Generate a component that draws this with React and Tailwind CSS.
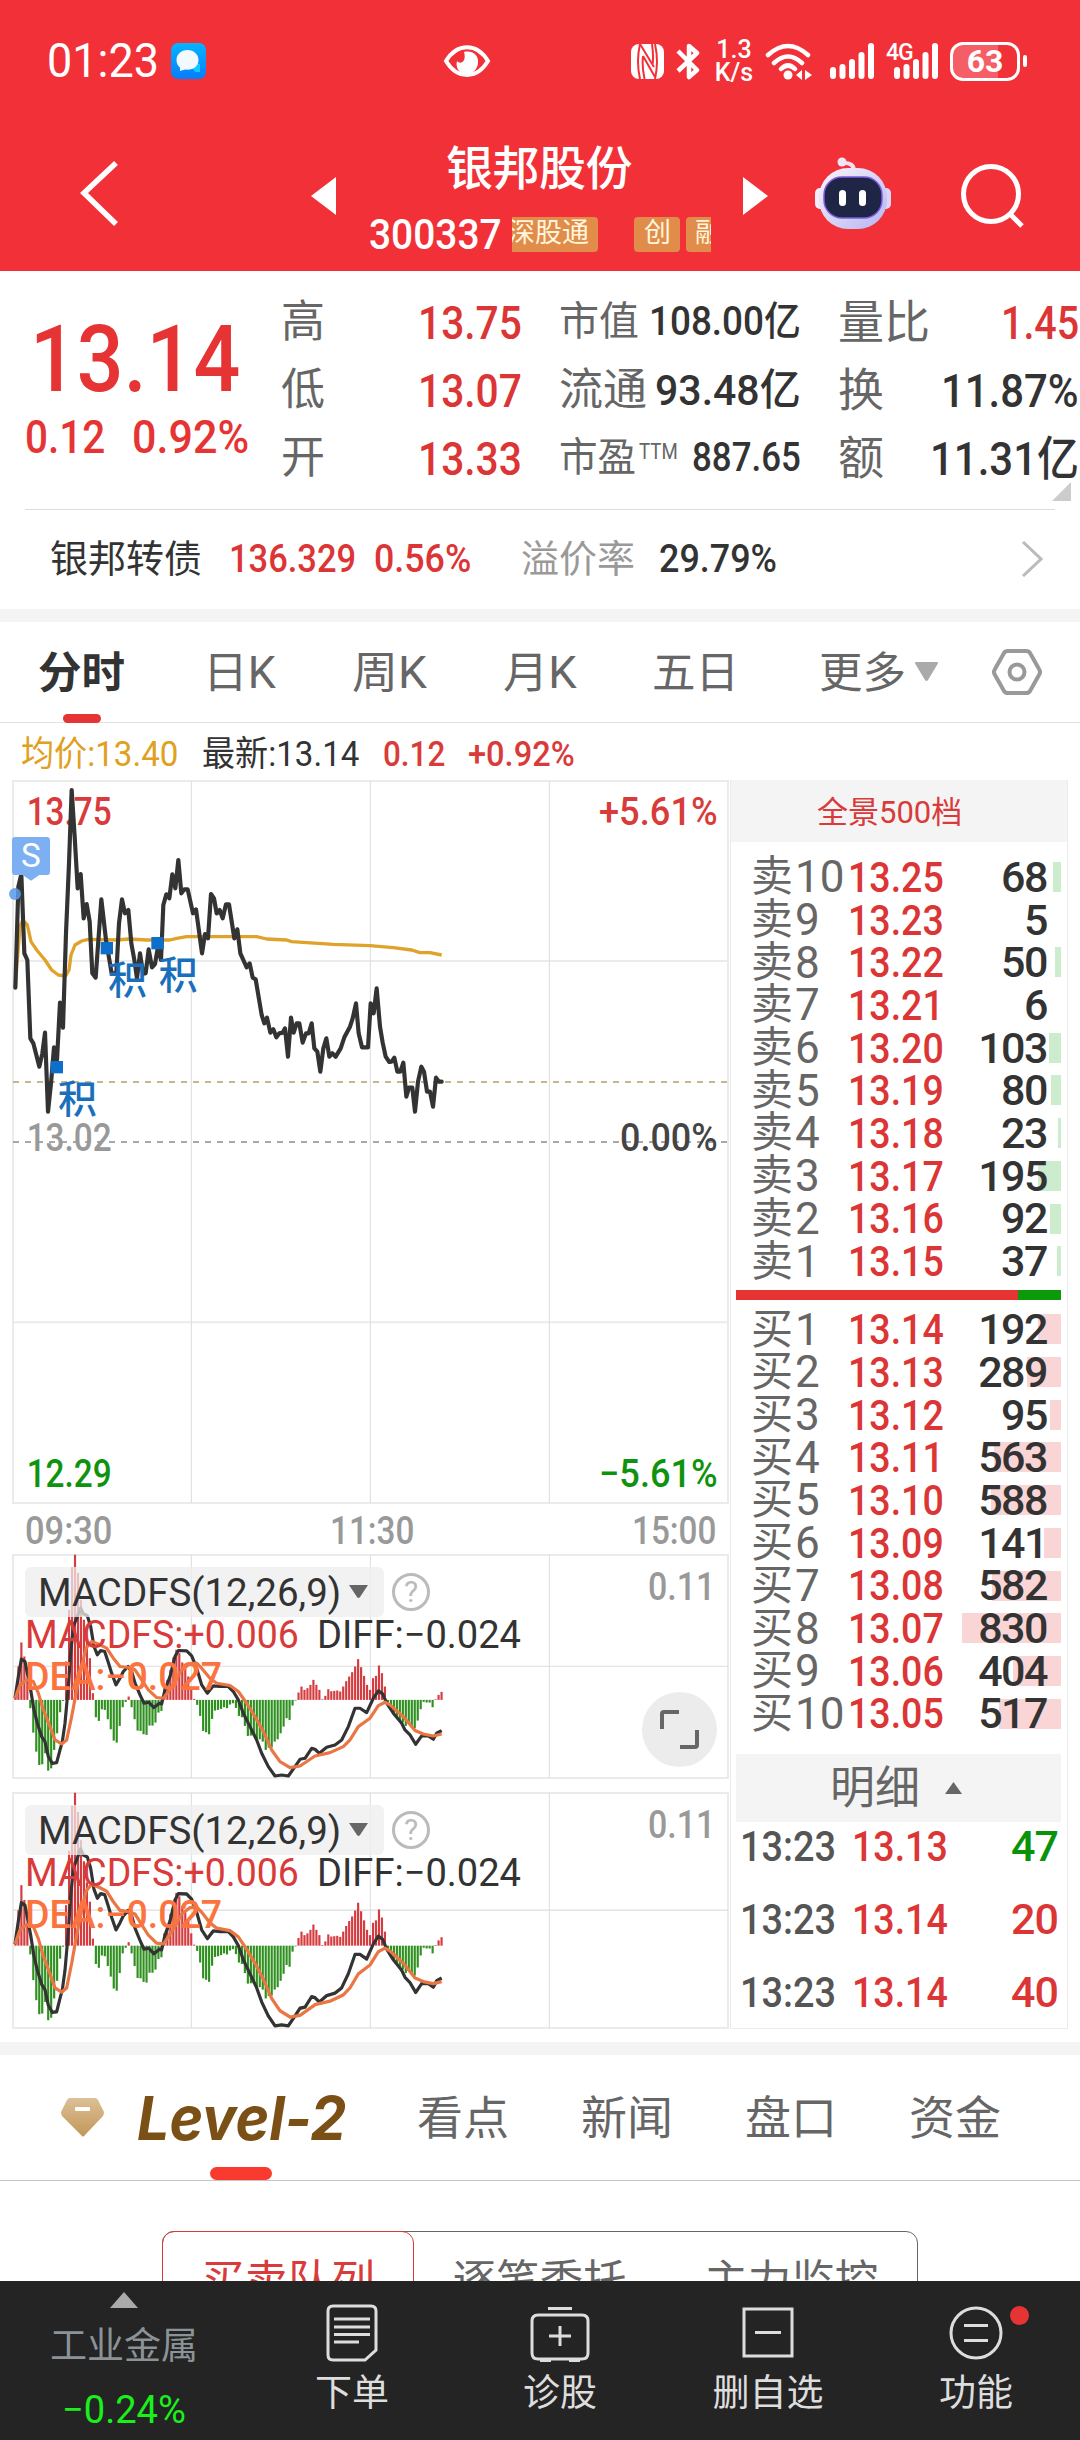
import React, { useLayoutEffect, useRef, useState } from 'react';

const asks = [
  ['卖10', '13.25', 68],
  ['卖9', '13.23', 5],
  ['卖8', '13.22', 50],
  ['卖7', '13.21', 6],
  ['卖6', '13.20', 103],
  ['卖5', '13.19', 80],
  ['卖4', '13.18', 23],
  ['卖3', '13.17', 195],
  ['卖2', '13.16', 92],
  ['卖1', '13.15', 37],
];

const bids = [
  ['买1', '13.14', 192],
  ['买2', '13.13', 289],
  ['买3', '13.12', 95],
  ['买4', '13.11', 563],
  ['买5', '13.10', 588],
  ['买6', '13.09', 141],
  ['买7', '13.08', 582],
  ['买8', '13.07', 830],
  ['买9', '13.06', 404],
  ['买10', '13.05', 517],
];

const trades = [
  { time: '13:23', price: '13.13', volume: 47, color: 'text-[#0a930a]' },
  { time: '13:23', price: '13.14', volume: 20, color: 'text-[#dc3535]' },
  { time: '13:23', price: '13.14', volume: 40, color: 'text-[#dc3535]' },
];

// the charts are drawn on a canvas of 3 units per pixel, one minute = 8.94 units
const price = '46,683 55,380 64,343 73,580 82,600 91,835 100,850 109,885 118,920 127,880 135,818 144,1055 153,970 162,862 171,900 180,728 189,803 198,520 207,310 215,90 224,230 233,385 242,342 251,475 260,432 269,485 277,640 287,653 304,418 318,540 335,640 349,640 357,490 366,418 375,460 385,450 394,550 403,600 411,655 420,580 429,640 437,640 446,568 456,622 465,612 474,560 483,600 490,435 499,403 508,415 517,343 526,385 535,300 544,400 553,388 563,388 579,460 588,448 606,580 615,522 624,535 633,402 642,415 650,460 659,450 668,475 678,433 687,433 703,535 712,508 721,580 740,622 749,610 758,653 767,658 785,765 793,790 801,773 811,818 820,808 829,832 838,820 848,818 855,805 864,890 873,773 881,818 890,790 898,790 908,848 918,820 926,820 935,790 943,865 952,875 961,935 970,865 979,835 988,890 997,880 1007,890 1022,865 1033,832 1050,800 1058,775 1068,730 1076,820 1086,862 1104,862 1112,730 1121,760 1130,685 1140,800 1148,848 1157,890 1168,906 1175,905 1183,893 1192,935 1201,935 1210,908 1219,1010 1227,983 1237,983 1245,1055 1254,965 1264,920 1272,935 1281,995 1290,995 1299,1040 1308,953 1317,965 1325,965';
const average = '46,683 52,600 60,500 68,480 82,495 93,545 110,570 135,600 155,630 175,645 197,648 207,630 213,585 225,555 245,543 265,538 350,540 385,537 440,540 510,540 530,535 560,530 770,530 800,537 860,540 875,545 1000,553 1110,557 1180,563 1235,570 1260,578 1290,578 1325,585';

const histogram = [
  10, 100, 172, 130, 65, -25, -98, -155, -195, -193, -160, -212, -205, -150, -100, -37, -3, 115, 270, 398, 435, 380, 300, 240,
  180, 125, 20, -52, -63, -28, -30, -58, -88, -122, -128, -78, -22, -6, 10, -22, -58, -92, -93, -103, -105, -77, -77, -68,
  -38, -33, 35, 60, 90, 127, 150, 140, 112, 95, 70, 35, 3, -15, -48, -93, -97, -103, -57, -32, -30, -27, -22, -25,
  -14, -10, -24, -48, -52, -78, -108, -107, -107, -120, -118, -125, -150, -143, -142, -125, -118, -100, -80, -55, -60, -17, -2, 22,
  40, 30, 35, 45, 60, 45, 30, 2, 12, 32, 26, 27, 28, 25, 40, 56, 70, 83, 100, 122, 98, 72, 45, 30,
  65, 72, 103, 80, 40, -8, -30, -45, -55, -62, -68, -78, -70, -82, -85, -62, -28, -6, -8, -8, -22, 2, 15, 24,
];
const diff = '45,475 55,410 64,358 75,365 82,400 92,450 102,510 112,550 125,590 135,605 145,650 157,670 170,668 180,630 187,605 195,550 205,440 212,340 220,260 230,235 242,205 250,222 262,228 272,260 282,320 292,345 302,332 314,335 325,368 335,400 348,435 360,415 370,395 384,380 395,395 405,430 420,465 432,490 446,487 462,503 478,490 485,492 495,450 510,410 525,350 535,332 560,333 575,348 590,385 605,435 622,460 640,438 660,440 685,440 700,455 715,480 730,520 750,560 770,600 785,640 805,680 825,708 845,705 865,708 885,680 900,658 915,655 935,625 945,628 958,640 980,622 1005,615 1025,600 1045,560 1065,505 1080,505 1100,518 1120,475 1135,453 1148,462 1160,490 1180,520 1205,550 1215,570 1230,585 1247,613 1265,588 1285,588 1300,598 1310,580 1325,572';
const dea = '45,475 60,435 80,420 100,425 115,460 130,510 150,560 165,600 185,612 200,600 215,530 230,450 245,380 258,325 275,305 300,315 320,325 340,355 360,380 385,383 405,390 425,420 445,450 470,473 490,475 505,455 525,425 545,390 570,372 590,370 605,385 630,415 650,430 690,437 715,455 740,490 765,530 790,575 815,630 840,665 870,683 900,678 945,648 990,638 1030,620 1050,600 1075,560 1110,535 1135,497 1155,487 1170,495 1210,530 1245,572 1270,582 1300,588 1325,582';

// squeezes a line of text to the given width, like the condensed digits of the app
const Fit = ({ w, className = '', children }) => {
  const ref = useRef(null);
  const [scale, setScale] = useState(1);

  useLayoutEffect(() => {
    setScale(w / ref.current.offsetWidth);
  }, [w, children]);

  return (
    <span className={`flex shrink-0 ${className}`} style={{ width: w }}>
      <span ref={ref} className="shrink-0 origin-left whitespace-nowrap" style={{ transform: `scaleX(${scale})` }}>
        {children}
      </span>
    </span>
  );
};

const Signal = ({ className }) => (
  <svg className={className} width="45" height="36" viewBox="0 0 45 36" fill="#fff">
    <rect x="0" y="24" width="6" height="12" rx="3" />
    <rect x="9.5" y="21" width="6" height="15" rx="3" />
    <rect x="19" y="16" width="6" height="20" rx="3" />
    <rect x="28.5" y="9" width="6" height="27" rx="3" />
    <rect x="38" y="0" width="6" height="36" rx="3" />
  </svg>
);

const StatusBar = () => (
  <div className="flex h-[122px] items-center pl-[47px] text-white">
    <Fit w={112} className="text-[49px]">01:23</Fit>
    <svg className="ml-3" width="35" height="36" viewBox="0 0 35 36">
      <defs>
        <linearGradient id="msg" x1="0" y1="0" x2="0" y2="1">
          <stop offset="0" stopColor="#05b4ff" />
          <stop offset="1" stopColor="#057cff" />
        </linearGradient>
      </defs>
      <rect width="35" height="36" rx="7" fill="url(#msg)" />
      <path d="M21 24a6 5 0 0 1 8-3v8h-5z" fill="#12c8ff" />
      <path d="M16.500 7C10 7 5.500 11.500 5.500 17c0 3.500 1.500 6 3.500 7.500V28l5-1.500c8 1 13.500-3 13.500-9.500C27.500 11.500 23 7 16.500 7z" fill="#f2faff" />
    </svg>
    <svg className="ml-[237px]" width="48" height="34" viewBox="0 0 48 34">
      <path d="M3 17C14-1.500 34-1.500 45 17 34 35.500 14 35.500 3 17z" fill="none" stroke="#fff" strokeWidth="4" />
      <path d="M21 8c8-2 15 3 14 11-.5 6-5 11-11 11-7 0-12-6-10-13 3 4 10 1 7-9z" fill="#fff" />
    </svg>
    <svg className="ml-[140px]" width="33" height="35" viewBox="0 0 33 35">
      <rect x="0" y="0" width="33" height="35" rx="8" fill="#fff" />
      <path d="M9 0C6.500 11 6.500 24 9 35M24 0c2.500 11 2.500 24 0 35" fill="none" stroke="#f23038" strokeWidth="2" />
      <path d="M9 0l14 23M12 12c-1 8 0 16 1.500 23M12 12l12 21M21 0c1 7 1.500 15 .5 21" fill="none" stroke="#f23038" strokeWidth="2" />
    </svg>
    <svg className="ml-3" width="24" height="37" viewBox="0 0 24 37" fill="none" stroke="#fff" strokeWidth="4.500" strokeLinejoin="round">
      <path d="M2 8l19 19-8 7V3l8 7L2 28" />
    </svg>
    <div className="ml-[17px] flex w-[34px] flex-col items-center text-[25px] leading-[23px] font-medium">
      <span>1.3</span>
      <span>K/s</span>
    </div>
    <svg className="ml-[14px]" width="48" height="37" viewBox="0 0 48 37" fill="none" stroke="#fff" strokeWidth="4.500" strokeLinecap="round">
      <path d="M3 12q20-18 40 0M9 20q14-13 28 0M16 26q7-7 14 0" />
      <circle cx="23" cy="32" r="4.500" fill="#fff" stroke="none" />
      <path d="M37 27v10l-6-5zM40 27v10l7-5z" fill="#fff" stroke="none" />
    </svg>
    <Signal className="ml-[17px]" />
    <div className="relative ml-[19px]">
      <Signal />
      <span className="absolute top-0 -left-[8px] bg-[#f23038] text-[23px] leading-[20px] font-medium tracking-tighter">4G</span>
    </div>
    <div className="ml-[11px] flex h-[39px] w-[70px] items-center justify-center rounded-[13px] border-[3px] border-white bg-linear-to-r from-[#f55e66] from-70% to-[#f23038] to-70% text-[32px] leading-none font-bold">
      63
    </div>
    <div className="ml-[3px] h-[12px] w-[4px] rounded-full bg-white" />
  </div>
);

const Badge = ({ children, className, shift = '' }) => (
  <span className={`flex h-[35px] items-center overflow-hidden bg-[#e18c4b] text-[27px] leading-none whitespace-nowrap text-[#fff6dd] ${className}`}>
    <span className={`-mt-px ${shift}`}>{children}</span>
  </span>
);

const Robot = () => (
  <svg className="ml-12" width="76" height="74" viewBox="0 0 76 74">
    <defs>
      <linearGradient id="head" x1="0" y1="0" x2="1" y2="1">
        <stop offset="0" stopColor="#fdf4fb" />
        <stop offset="1" stopColor="#b4b5f3" />
      </linearGradient>
    </defs>
    <path d="M27 6q12-1 12 8" fill="none" stroke="#f3dff0" strokeWidth="4" />
    <circle cx="27" cy="5" r="4.500" fill="#f3e4f6" />
    <rect x="0" y="31" width="12" height="21" rx="5" fill="#f3ecfb" />
    <rect x="64" y="31" width="12" height="21" rx="5" fill="#dcd6f8" />
    <rect x="4" y="11" width="68" height="61" rx="29" fill="url(#head)" />
    <rect x="9" y="20" width="58" height="41" rx="18" fill="#1f2645" stroke="#7a5be0" strokeWidth="1.500" />
    <rect x="24" y="33" width="7" height="16" rx="3.500" fill="#fff" />
    <rect x="44" y="33" width="7" height="16" rx="3.500" fill="#fff" />
  </svg>
);

const Header = () => (
  <div className="flex h-[149px] items-start pl-[78px] text-white">
    <svg className="mt-[39px]" width="42" height="66" viewBox="0 0 42 66" fill="none" stroke="#fff" strokeWidth="5.500">
      <path d="M38 2L6 32l32 31" />
    </svg>
    <svg className="mt-[55px] ml-[191px]" width="25" height="38" viewBox="0 0 25 38" fill="#fff">
      <path d="M25 0v38L0 19z" />
    </svg>
    <div className="ml-[30px] flex w-[346px] flex-col">
      <div className="mt-[23px] ml-[80px] text-[47px] leading-[48px] font-medium tracking-[-0.5px]">银邦股份</div>
      <div className="mt-[20px] flex items-center">
        <Fit w={133} className="ml-[3px] text-[43px] leading-[42px] font-medium">300337</Fit>
        <Badge className="ml-[10px] w-[86px] rounded-r-[4px]" shift="-ml-1">深股通</Badge>
        <Badge className="ml-[36px] w-[46px] rounded-[4px] pl-[10px]">创</Badge>
        <Badge className="ml-[6px] w-[25px] rounded-l-[4px] pl-[9px]">融</Badge>
      </div>
    </div>
    <svg className="mt-[55px] ml-[31px]" width="25" height="38" viewBox="0 0 25 38" fill="#fff">
      <path d="M0 0v38l25-19z" />
    </svg>
    <div className="-ml-px mt-[35px]"><Robot /></div>
    <svg className="mt-[41px] ml-[70px]" width="64" height="66" viewBox="0 0 64 66" fill="none" stroke="#fff" strokeWidth="5">
      <circle cx="30" cy="31" r="27.500" />
      <path d="M49 51l12 12" />
    </svg>
  </div>
);

const Quote = () => (
  <div className="flex h-[238px] w-[1080px] leading-none">
    <div className="w-[281px] pl-[25px] text-[#e63333]">
      <Fit w={210} className="mt-[42px] ml-[5px] text-[93px] font-medium">13.14</Fit>
      <div className="mt-[8px] flex text-[46px]">
        <Fit w={80} className="font-medium">0.12</Fit>
        <Fit w={117} className="ml-[27px] font-medium">0.92%</Fit>
      </div>
    </div>
    <div className="grid w-[240px] auto-rows-[68px] items-center pt-[17px] text-[44px] text-[#666]">
      <div className="flex items-center"><span className="w-[137px]">高</span><Fit w={104} className="text-[47px] font-medium text-[#dc3535]">13.75</Fit></div>
      <div className="flex items-center"><span className="w-[137px]">低</span><Fit w={104} className="text-[47px] font-medium text-[#dc3535]">13.07</Fit></div>
      <div className="flex items-center"><span className="w-[137px]">开</span><Fit w={104} className="text-[47px] font-medium text-[#dc3535]">13.33</Fit></div>
    </div>
    <div className="ml-[38px] grid w-[242px] auto-rows-[68px] items-center pt-[17px] text-[40px] text-[#666]">
      <div className="flex items-center justify-between"><span>市值</span><Fit w={152} className="text-[40px] font-medium text-[#333]">108.00亿</Fit></div>
      <div className="flex items-center justify-between"><span className="text-[44px]">流通</span><Fit w={146} className="text-[43px] font-medium text-[#333]">93.48亿</Fit></div>
      <div className="flex items-center justify-between"><Fit w={77}>市盈</Fit><Fit w={39} className="-mt-3 text-[22px]">TTM</Fit><Fit w={109} className="ml-3 text-[40px] font-medium text-[#333]">887.65</Fit></div>
    </div>
    <div className="ml-[37px] grid w-[241px] auto-rows-[68px] items-center pt-[17px] text-[46px] text-[#666]">
      <div className="flex items-center justify-between"><span>量比</span><Fit w={78} className="text-[47px] font-medium text-[#dc3535]">1.45</Fit></div>
      <div className="flex items-center justify-between"><span>换</span><Fit w={138} className="text-[47px] font-medium text-[#333]">11.87%</Fit></div>
      <div className="flex items-center justify-between"><span>额</span><Fit w={149} className="text-[47px] font-medium text-[#333]">11.31亿</Fit></div>
      <svg className="-mt-[10px] ml-[214px] self-start" width="19" height="19" viewBox="0 0 19 19"><path d="M19 0v19H0z" fill="#ccc" /></svg>
    </div>
  </div>
);

const Bond = () => (
  <div className="mx-[25px] flex h-[100px] items-center border-t border-[#ddd] pr-[12px] pb-[2px] pl-[25px] text-[38px] leading-none">
    <span className="text-[#333]">银邦转债</span>
    <Fit w={127} className="ml-[27px] font-medium text-[#dc3535]">136.329</Fit>
    <Fit w={97} className="ml-[18px] font-medium text-[#dc3535]">0.56%</Fit>
    <span className="ml-[50px] text-[#999]">溢价率</span>
    <Fit w={118} className="ml-[24px] font-medium text-[#333]">29.79%</Fit>
    <svg className="ml-auto" width="22" height="36" viewBox="0 0 22 36" fill="none" stroke="#bbb" strokeWidth="3"><path d="M2 1l18 17L2 35" /></svg>
  </div>
);

const ChartTabs = () => (
  <div className="flex h-[101px] items-center border-b border-[#e2e2e2] pt-[3px] pl-[38px] text-[43.5px] leading-none text-[#666]">
    <div className="relative -mt-[3px] flex h-[101px] items-center pt-[3px] font-bold text-[#333]">
      分时
      <span className="absolute bottom-0 left-[25px] h-[9px] w-[38px] rounded-full bg-[#e63333]" />
    </div>
    <Fit w={73} className="ml-[78px]">日K</Fit>
    <Fit w={75} className="ml-[76px]">周K</Fit>
    <Fit w={74} className="ml-[76px]">月K</Fit>
    <span className="ml-[75px]">五日</span>
    <span className="ml-[80px]">更多</span>
    <svg className="-mt-1 ml-[9px]" width="23" height="20" viewBox="0 0 23 20"><path d="M1 0h21q2 0 0 3L13 18q-1.500 2-3 0L1 3q-2-3 0-3z" fill="#aaa" /></svg>
    <svg className="-mt-[3px] ml-[54px]" width="50" height="48" viewBox="0 0 50 48" fill="none" stroke="#999" strokeWidth="4" strokeLinejoin="round">
      <path d="M16 3h18q3 0 4 2l9 16q2 3 0 6l-9 16q-1 2-4 2H16q-3 0-4-2L3 27q-2-3 0-6l9-16q1-2 4-2z" />
      <circle cx="25" cy="24" r="7.500" />
    </svg>
  </div>
);

const Note = ({ x, y }) => (
  <>
    <rect x={x} y={y} width="37" height="37" fill="#0d6fc9" />
    <text x={x + 22} y={y + 157} fontSize="117" fill="#1a6fbd">积</text>
  </>
);

const PriceChart = () => (
  <svg className="block" width="730" height="724" viewBox="0 60 2190 2172" fontWeight="500">
    <g fill="none" stroke="#ebebeb" strokeWidth="6">
      <rect x="39" y="63" width="2145" height="2166" />
      <path d="M39 603h2145M39 1687h2145" />
      <path d="M574 63v2166M1111 63v2166M1648 63v2166" stroke="#ddd" strokeWidth="3" />
    </g>
    <text x="80" y="194" fontSize="116" fill="#d93a3a" textLength="255" lengthAdjust="spacingAndGlyphs">13.75</text>
    <text x="1797" y="194" fontSize="116" fill="#d93a3a" textLength="356" lengthAdjust="spacingAndGlyphs">+5.61%</text>
    <path d="M39 966h2145" stroke="#b5a06e" strokeWidth="5" strokeDasharray="18 18" />
    <path d="M39 1146h2145" stroke="#8c8c8c" strokeWidth="5" strokeDasharray="18 18" />
    <polyline points={average} fill="none" stroke="#dfa22a" strokeWidth="10" strokeLinejoin="round" />
    <polyline points={price} fill="none" stroke="#333" strokeWidth="12.500" strokeLinejoin="round" strokeLinecap="round" />
    <Note x={302} y={546} />
    <Note x={454} y={531} />
    <Note x={152} y={903} />
    <circle cx="45" cy="402" r="18" fill="#5b9aea" fillOpacity="0.85" />
    <path d="M46 231h94q10 0 10 10v94q0 10-10 10h-22l-25 17-25-17H46q-10 0-10-10v-94q0-10 10-10z" fill="#7db0f2" />
    <text x="93" y="322" fontSize="100" fontWeight="400" fill="#fff" textAnchor="middle">S</text>
    <text x="80" y="1172" fontSize="116" fill="#999" textLength="255" lengthAdjust="spacingAndGlyphs">13.02</text>
    <text x="1860" y="1172" fontSize="116" fill="#444" textLength="293" lengthAdjust="spacingAndGlyphs">0.00%</text>
    <text x="80" y="2181" fontSize="116" fill="#0f930f" textLength="255" lengthAdjust="spacingAndGlyphs">12.29</text>
    <text x="1797" y="2181" fontSize="116" fill="#0f930f" textLength="356" lengthAdjust="spacingAndGlyphs">−5.61%</text>
  </svg>
);

const MacdPanel = ({ height, expand }) => (
  <div className="relative">
    <svg className="block" width="730" height={height} viewBox="0 43 2190 674" preserveAspectRatio="none">
      <g fill="none" stroke="#ebebeb" strokeWidth="6">
        <rect x="39" y="46" width="2145" height="668" />
        <path d="M39 379h2145M574 46v668M1111 46v668M1648 46v668" stroke="#ddd" strokeWidth="3" />
      </g>
      {histogram.map((v, i) => (
        <rect
          key={i}
          x={43 + i * 8.94}
          y={v > 0 ? 480 - v : 480}
          width="6.500"
          height={Math.abs(v)}
          fill={v > 0 ? '#d43c40' : '#2f9020'}
        />
      ))}
      <polyline points={diff} fill="none" stroke="#333" strokeWidth="9.500" strokeLinejoin="round" />
      <polyline points={dea} fill="none" stroke="#ea7643" strokeWidth="9.500" strokeLinejoin="round" />
    </svg>
    {/* indicator names lie over the plot */}
    <div className="absolute inset-0 pt-[13px] pl-[25px] leading-none font-medium text-[#333]">
      <div className="flex items-center">
        <div className="flex h-[50px] w-[359px] items-center rounded-md bg-[#eee]/75 pt-0.5 pl-[13px] text-[39px]">
          <Fit w={303} className="font-normal">MACDFS(12,26,9)</Fit>
          <svg className="-mt-1 ml-[8px]" width="19" height="13" viewBox="0 0 19 13"><path d="M0 0h19l-8 12q-1.500 2-3 0z" fill="#666" /></svg>
        </div>
        <div className="ml-2 flex size-[38px] items-center justify-center rounded-full border-[3px] border-[#bbb] text-[30px] font-normal text-[#bbb]">?</div>
        <Fit w={67} className="-mt-[10px] ml-[218px] text-[38px] text-[#999]">0.11</Fit>
      </div>
      <div className="flex text-[39px] leading-[36px] font-normal">
        <Fit w={274} className="text-[#d93a3a]">MACDFS:+0.006</Fit>
        <Fit w={204} className="ml-[18px]">DIFF:−0.024</Fit>
      </div>
      <Fit w={197} className="mt-[6px] text-[39px] leading-[36px] text-[#fb7440]">DEA:−0.027</Fit>
    </div>
    {expand && (
      <div className="absolute right-[13px] bottom-[12px] flex size-[75px] items-center justify-center rounded-full bg-[#ececec]">
        <svg width="39" height="39" viewBox="0 0 39 39" fill="none" stroke="#666" strokeWidth="4"><path d="M2 19V4q0-2 2-2h15M37 20v15q0 2-2 2H20" /></svg>
      </div>
    )}
  </div>
);

const Level = ({ name, price: value, volume, bar }) => (
  <div className="relative flex h-[42.7px] items-center pr-[14px] pl-[15px] leading-none">
    <div className={`absolute top-[6px] right-0 h-[30px] ${bar}`} style={{ width: volume < 10 ? 0 : volume * 0.119 }} />
    <span className="relative flex w-[97px] items-center text-[42px] text-[#666]">
      <span>{name[0]}</span>
      <span className="ml-0.5 text-[44px]">{name.slice(1)}</span>
    </span>
    <Fit w={96} className="relative text-[43px] font-medium text-[#dc3535]">{value}</Fit>
    <span className="relative ml-auto text-[43px] font-medium tracking-[-1.5px] text-[#333]">{volume}</span>
  </div>
);

const OrderBook = () => (
  <div className="flex w-[338px] flex-col border border-t-0 border-[#ebebeb]">
    <div className="flex h-[62px] shrink-0 items-center bg-[#f4f4f4] pt-[2px] pl-[86px] text-[31px] leading-none text-[#d93a3a]">全景500档</div>
    <div className="mt-[14px] mr-[6px] ml-[5px]">
      {asks.map(([name, value, volume]) => (
        <Level key={name} name={name} price={value} volume={volume} bar="bg-[#cdebcd]" />
      ))}
    </div>
    <div className="mt-[7.5px] mr-[6px] ml-[5px] flex h-[10px] shrink-0">
      <div className="w-[282px] bg-[#e63333]" />
      <div className="flex-1 bg-[#0a9a0a]" />
    </div>
    <div className="mt-[8px] mr-[6px] ml-[5px]">
      {bids.map(([name, value, volume]) => (
        <Level key={name} name={name} price={value} volume={volume} bar="bg-[#fad5d5]" />
      ))}
    </div>
    <div className="mt-[19px] mr-[6px] ml-[5px] flex h-[68px] shrink-0 items-center bg-[#f4f4f4] pl-[94px] text-[45px] leading-none text-[#666]">
      明细
      <svg className="ml-[25px]" width="17" height="12" viewBox="0 0 17 12"><path d="M8.500 0L17 12H0z" fill="#666" /></svg>
    </div>
    <div className="flex h-[206px] shrink-0 flex-col gap-[29px] pt-[2px] pr-[9px] pl-[9px] text-[43px] leading-[44px] font-medium">
      {trades.map((t, i) => (
        <div key={i} className="flex">
          <Fit w={96} className="text-[#555]">{t.time}</Fit>
          <Fit w={96} className="ml-[16px] text-[#dc3535]">{t.price}</Fit>
          <span className={`ml-auto tracking-[-1px] ${t.color}`}>{t.volume}</span>
        </div>
      ))}
    </div>
  </div>
);

const NewsTabs = () => (
  <div className="flex h-[126px] items-center border-b border-[#c4c4c4] pl-[61px] text-[46px] leading-none text-[#666]">
    <svg width="43" height="39" viewBox="0 0 43 39">
      <defs>
        <linearGradient id="gem" x1="0" y1="0" x2="0" y2="1"><stop offset="0" stopColor="#dcc096" /><stop offset="1" stopColor="#c2965a" /></linearGradient>
      </defs>
      <path d="M9 0h25q2 0 3 2l6 12q0 2-1 4L24 37q-2 3-4 0L1 18q-1-2-1-4L6 2q1-2 3-2z" fill="url(#gem)" />
      <rect x="14" y="9" width="15" height="4" rx="1" fill="#fff" />
    </svg>
    <div className="relative ml-[33px] flex h-full items-center font-[Inter,sans-serif] text-[60px] font-bold text-[#7a5016] italic">
      <Fit w={209}>Level-2</Fit>
      <span className="absolute bottom-0 left-[73px] h-[13px] w-[62px] rounded-full bg-[#fb3a2f]" />
    </div>
    <span className="ml-[71px]">看点</span>
    <span className="ml-[72px]">新闻</span>
    <span className="ml-[72px]">盘口</span>
    <span className="ml-[72px]">资金</span>
  </div>
);

const BottomBar = () => (
  <div className="flex h-[159px] bg-[#242424] text-[37px] leading-none text-[#ddd]">
    <div className="flex w-[248px] flex-col items-center pt-[11px] text-[#8b9399]">
      <svg width="28" height="16" viewBox="0 0 28 16"><path d="M14 0l14 16H0z" fill="#aaa" /></svg>
      <span className="mt-[20px]">工业金属</span>
      <Fit w={124} className="mt-[26px] text-[39px] text-[#1af01a]">−0.24%</Fit>
    </div>
    <div className="flex w-[208px] flex-col items-center pt-[23px]">
      <svg width="52" height="58" viewBox="0 0 52 58" fill="none" stroke="#ddd" strokeWidth="3">
        <path d="M7 2h38q5 0 5 5v39L39 56H7q-5 0-5-5V7q0-5 5-5z" />
        <path d="M8 15h36M8 23h36M8 30.500h36M8 38h25" />
      </svg>
      <span className="mt-[13px]">下单</span>
    </div>
    <div className="flex w-[208px] flex-col items-center pt-[26px]">
      <svg width="60" height="55" viewBox="0 0 60 55" fill="none" stroke="#ddd" strokeWidth="3">
        <path d="M18 1.500h24M8 8h44q6 0 6 6v32q0 6-6 6H8q-6 0-6-6V14q0-6 6-6zM10 53.500h11M39 53.500h11" />
        <path d="M30 19v20M19 29h22" />
      </svg>
      <span className="mt-[13px]">诊股</span>
    </div>
    <div className="flex w-[208px] flex-col items-center pt-[26px]">
      <svg width="52" height="51" viewBox="0 0 52 51" fill="none" stroke="#ddd" strokeWidth="3">
        <path d="M2 2h48v47H2zM13 25.500h26" />
      </svg>
      <span className="mt-[17px]">删自选</span>
    </div>
    <div className="relative flex w-[208px] flex-col items-center pt-[25px]">
      <svg width="54" height="54" viewBox="0 0 54 54" fill="none" stroke="#ddd" strokeWidth="3">
        <circle cx="27" cy="27" r="25" />
        <path d="M15 19.500h24M15 34.500h24" />
      </svg>
      <span className="absolute top-[25px] left-[138px] size-[19px] rounded-full bg-[#e63333]" />
      <span className="mt-[15px]">功能</span>
    </div>
  </div>
);

export default function App() {
  return (
    <div className="flex h-[2440px] w-[1080px] flex-col overflow-hidden bg-white font-[Roboto,'Noto_Sans_CJK_SC',sans-serif]">
      <div className="bg-[#f23038]">
        <StatusBar />
        <Header />
      </div>
      <Quote />
      <Bond />
      <div className="h-[13px] bg-[#f4f4f4]" />
      <ChartTabs />
      <div className="flex h-[57px] items-center pt-[5px] pl-[21px] text-[35px] leading-none">
        <Fit w={157} className="text-[#e0a020]">均价:13.40</Fit>
        <Fit w={157} className="ml-[24px] text-[#333]">最新:13.14</Fit>
        <Fit w={62} className="ml-[24px] font-medium text-[#d93a3a]">0.12</Fit>
        <Fit w={107} className="ml-[23px] font-medium text-[#d93a3a]">+0.92%</Fit>
      </div>
      <div className="flex h-[1249px]">
        <div className="flex w-[730px] flex-col">
          <PriceChart />
          <div className="flex h-[50px] items-center pt-[4px] pr-[14px] pl-[25px] text-[38px] leading-none text-[#999]">
            <Fit w={87} className="font-medium">09:30</Fit>
            <Fit w={84} className="ml-[218px] font-medium">11:30</Fit>
            <Fit w={84} className="ml-auto font-medium">15:00</Fit>
          </div>
          <MacdPanel height="225" expand />
          <div className="h-[13px]" />
          <MacdPanel height="237" />
        </div>
        <OrderBook />
      </div>
      <div className="mt-[13px] h-[13px] bg-[#f4f4f4]" />
      <NewsTabs />
      <div className="flex h-[100px] flex-col items-center overflow-hidden pt-[50px]">
        <div className="flex h-[80px] w-[756px] rounded-t-xl border border-[#666] pt-[28px] text-[43.5px] leading-none text-[#666]">
          <div className="-mt-[29px] -ml-px flex h-[80px] w-[252px] justify-center rounded-t-xl border border-[#d93a3a] pt-[28px] text-[#d93a3a]">买卖队列</div>
          <div className="flex flex-1 justify-center">逐笔委托</div>
          <div className="flex flex-1 justify-center">主力监控</div>
        </div>
      </div>
      <BottomBar />
    </div>
  );
}
